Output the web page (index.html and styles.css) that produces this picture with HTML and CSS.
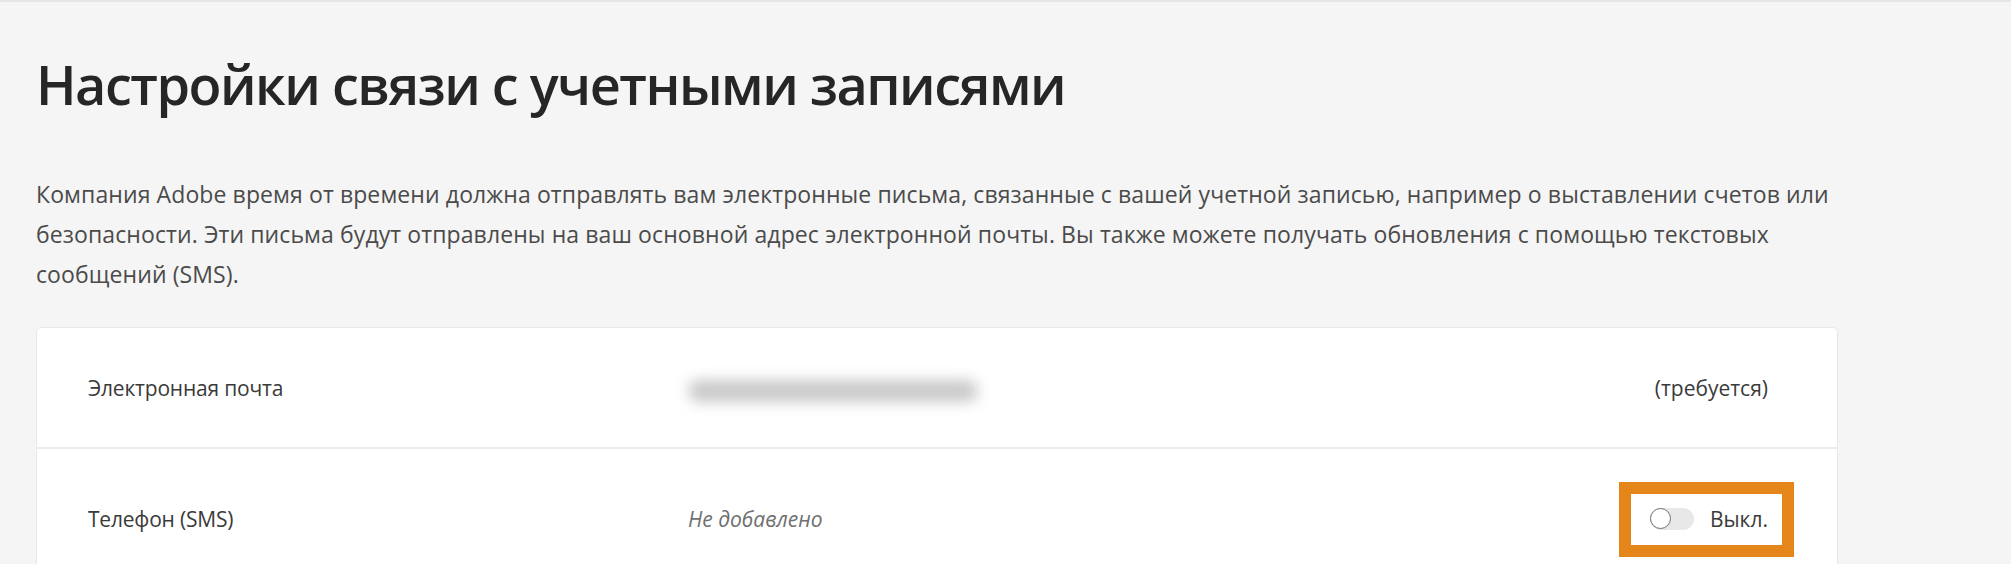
FILE: index.html
```html
<!DOCTYPE html>
<html lang="ru">
<head>
    <meta charset="UTF-8">
    <meta name="viewport" content="width=device-width, initial-scale=1.0">
    <title>Настройки связи с учетными записями</title>
    <link rel="stylesheet" href="styles.css">
</head>
<body>
    <div class="page">
        <h1>Настройки связи с учетными записями</h1>

        <p class="intro">Компания Adobe время от времени должна отправлять вам электронные письма, связанные с вашей учетной записью, например о выставлении счетов или безопасности. Эти письма будут отправлены на ваш основной адрес электронной почты. Вы также можете получать обновления с помощью текстовых сообщений (SMS).</p>

        <!-- Contact channels -->
        <div class="card">
            <div class="row">
                <div class="label">Электронная почта</div>
                <div class="value"><span class="blurred"></span></div>
                <div class="status">(требуется)</div>
            </div>
            <div class="row row-phone">
                <div class="label">Телефон (SMS)</div>
                <div class="value empty">Не добавлено</div>
                <div class="status">
                    <span class="highlight">
                        <span class="switch"><span class="knob"></span></span>
                        <span class="switch-text">Выкл.</span>
                    </span>
                </div>
            </div>
        </div>
    </div>
</body>
</html>
```

FILE: styles.css
```css
body {
    margin: 0;
    background: #f5f5f5;
    border-top: 2px solid #e6e6e6;
    font-family: "Open Sans", Arial, sans-serif;
    color: #4b4b4b;
}
.page {
    padding: 48px 36px 0;
    max-width: 1802px;
}
h1 {
    margin: 0;
    font-size: 54px;
    line-height: 68px;
    font-weight: 600;
    letter-spacing: -1.5px;
    color: #262626;
}
.intro {
    margin: 56px 0 33px;
    font-size: 23px;
    line-height: 40px;
    letter-spacing: 0.1px;
}
.card {
    background: #fff;
    border: 1px solid #e8e8e8;
    border-radius: 5px;
}
.row {
    display: grid;
    grid-template-columns: 600px 1fr auto;
    align-items: center;
    min-height: 119px;
    padding: 0 69px 0 51px;
    font-size: 21px;
    line-height: 30px;
    border-bottom: 2px solid #ebebeb;
}
.row-phone {
    min-height: 140px;
    border-bottom: none;
}
.label {
    color: #3a3a3a;
    letter-spacing: -0.2px;
}
.value.empty {
    font-style: italic;
    color: #707070;
}
.blurred {
    display: block;
    width: 290px;
    height: 22px;
    margin-top: 6px;
    background: #c9c9c9;
    border-radius: 11px;
    filter: blur(7px);
}
.status {
    color: #3a3a3a;
}
.highlight {
    display: flex;
    align-items: center;
    gap: 16px;
    margin-right: -26px;
    padding: 12px 14px 13px 19px;
    border: 12px solid #e5861a;
    background: #fff;
}
.switch {
    position: relative;
    display: inline-block;
    width: 44px;
    height: 22px;
    border-radius: 11px;
    background: #e8e8e8;
}
.knob {
    position: absolute;
    left: 0;
    top: 0;
    width: 19px;
    height: 19px;
    border: 1.5px solid #6e6e6e;
    border-radius: 50%;
    background: #fff;
}
.switch-text {
    line-height: 26px;
}
```
